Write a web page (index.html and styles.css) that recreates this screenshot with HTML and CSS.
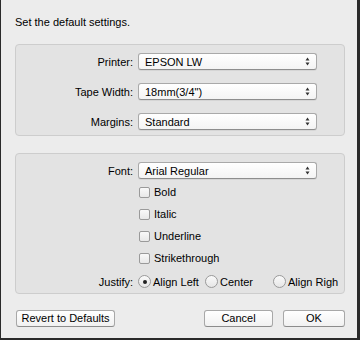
FILE: index.html
```html
<!DOCTYPE html>
<html>
<head>
<meta charset="utf-8">
<link rel="stylesheet" href="styles.css">
</head>
<body>
<div class="window">
  <div class="title">Set the default settings.</div>

  <div class="group group-printer">
    <div class="row">
      <div class="label">Printer:</div>
      <div class="popup"><span class="popup-text">EPSON LW</span><span class="arrows"><svg width="5" height="9" viewBox="0 0 5 9"><path d="M2.5 0.5 L4.5 3.5 L0.5 3.5 Z M2.5 8.5 L4.5 5.5 L0.5 5.5 Z" fill="#333"/></svg></span></div>
    </div>
    <div class="row">
      <div class="label">Tape Width:</div>
      <div class="popup"><span class="popup-text">18mm(3/4")</span><span class="arrows"><svg width="5" height="9" viewBox="0 0 5 9"><path d="M2.5 0.5 L4.5 3.5 L0.5 3.5 Z M2.5 8.5 L4.5 5.5 L0.5 5.5 Z" fill="#333"/></svg></span></div>
    </div>
    <div class="row">
      <div class="label">Margins:</div>
      <div class="popup"><span class="popup-text">Standard</span><span class="arrows"><svg width="5" height="9" viewBox="0 0 5 9"><path d="M2.5 0.5 L4.5 3.5 L0.5 3.5 Z M2.5 8.5 L4.5 5.5 L0.5 5.5 Z" fill="#333"/></svg></span></div>
    </div>
  </div>

  <div class="group group-font">
    <div class="row">
      <div class="label">Font:</div>
      <div class="popup"><span class="popup-text">Arial Regular</span><span class="arrows"><svg width="5" height="9" viewBox="0 0 5 9"><path d="M2.5 0.5 L4.5 3.5 L0.5 3.5 Z M2.5 8.5 L4.5 5.5 L0.5 5.5 Z" fill="#333"/></svg></span></div>
    </div>
    <div class="checks">
      <div class="check"><span class="box"></span>Bold</div>
      <div class="check"><span class="box"></span>Italic</div>
      <div class="check"><span class="box"></span>Underline</div>
      <div class="check"><span class="box"></span>Strikethrough</div>
    </div>
    <div class="row justify-row">
      <div class="label">Justify:</div>
      <div class="radios">
        <div class="radio r-left"><span class="dot on"></span>Align Left</div>
        <div class="radio r-center"><span class="dot"></span>Center</div>
        <div class="radio r-right"><span class="dot"></span>Align Righ</div>
      </div>
    </div>
  </div>

  <div class="buttons">
    <div class="btn btn-revert">Revert to Defaults</div>
    <div class="spacer"></div>
    <div class="btn btn-cancel">Cancel</div>
    <div class="btn btn-ok">OK</div>
  </div>
</div>
</body>
</html>
```

FILE: styles.css
```css
html, body {
  margin: 0;
  padding: 0;
}
body {
  width: 360px;
  height: 340px;
  overflow: hidden;
  font-family: "Liberation Sans", Arial, sans-serif;
  font-size: 11px;
  color: #000;
}
.window {
  box-sizing: border-box;
  width: 360px;
  height: 340px;
  background: #ececec;
  border-left: 1px solid #2a2a2a;
  border-right: 3px solid #2a2a2a;
  border-bottom: 2px solid #2a2a2a;
  padding: 0 12px 0 14px;
  display: flex;
  flex-direction: column;
}
.title {
  padding-top: 14px;
  height: 16px;
  line-height: 16px;
  padding-bottom: 14px;
}
.group {
  box-sizing: border-box;
  width: 330px;
  background: #e3e3e3;
  border: 1px solid #cdcdcd;
  border-radius: 4px;
  display: flex;
  flex-direction: column;
}
.group-printer {
  height: 92px;
  padding-top: 8px;
  gap: 13px;
}
.group-font {
  margin-top: 17px;
  height: 141px;
  padding-top: 8px;
}
.row {
  display: flex;
  align-items: center;
  height: 17px;
}
.label {
  width: 117px;
  text-align: right;
  margin-right: 5px;
}
.popup {
  box-sizing: border-box;
  width: 179px;
  height: 17px;
  background: linear-gradient(#ffffff, #f4f4f4);
  border: 1px solid #a9a9a9;
  border-bottom-color: #8e8e8e;
  border-radius: 3px;
  box-shadow: 0 1px 0 rgba(0,0,0,0.06);
  display: flex;
  align-items: center;
  padding-left: 6px;
  padding-right: 6px;
}
.popup-text {
  flex: 1;
}
.arrows {
  display: flex;
  align-items: center;
}
.checks {
  display: flex;
  flex-direction: column;
  margin-top: 2px;
  margin-left: 123px;
}
.check {
  display: flex;
  align-items: center;
  height: 22px;
}
.box {
  box-sizing: border-box;
  width: 11px;
  height: 11px;
  border: 1px solid #9a9a9a;
  border-radius: 2px;
  background: linear-gradient(#f9f9f9, #e8e8e8);
  margin-right: 4px;
}
.justify-row {
  margin-top: 4px;
}
.radios {
  display: flex;
  align-items: center;
  white-space: nowrap;
}
.radio {
  display: flex;
  align-items: center;
  flex: none;
}
.r-left { width: 67px; }
.r-center { width: 68px; }
.dot {
  box-sizing: border-box;
  width: 13px;
  height: 13px;
  border: 1px solid #9a9a9a;
  border-radius: 50%;
  background: linear-gradient(#fafafa, #e6e6e6);
  margin-right: 2px;
  flex: none;
  display: flex;
  align-items: center;
  justify-content: center;
}
.dot.on::after {
  content: "";
  width: 4px;
  height: 4px;
  border-radius: 50%;
  background: #222;
}
.buttons {
  display: flex;
  margin-top: 16px;
  width: 330px;
}
.spacer { flex: 1; }
.btn {
  box-sizing: border-box;
  height: 17px;
  line-height: 15px;
  text-align: center;
  background: linear-gradient(#ffffff, #f1f1f1);
  border: 1px solid #a8a8a8;
  border-bottom-color: #8c8c8c;
  border-radius: 3px;
}
.btn-revert { width: 99px; margin-left: 1px; }
.btn-cancel { width: 69px; margin-right: 10px; }
.btn-ok { width: 62px; }
```
